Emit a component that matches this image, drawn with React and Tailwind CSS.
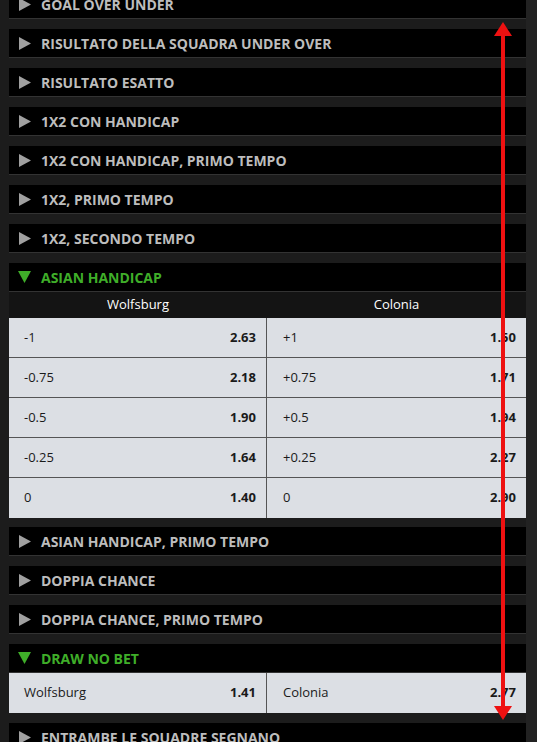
import React from 'react';

const font = { fontFamily: '"Open Sans", "Liberation Sans", sans-serif' };

function Collapsed({ title }) {
  return (
    <div className="h-[29px] mb-[10px] bg-black border-b border-[#333] flex items-center">
      <svg width="12" height="13" viewBox="0 0 12 13" className="ml-[10px] mr-[10px]">
        <polygon points="0,0 12,6.5 0,13" fill="#a0a0a0" />
      </svg>
      <span className="text-[14px] font-bold uppercase text-[#bdbdbd]">{title}</span>
    </div>
  );
}

function Open({ title }) {
  return (
    <div className="h-[29px] bg-black border-b border-[#333] flex items-center">
      <svg width="13" height="12" viewBox="0 0 13 12" className="ml-[9px] mr-[10px]">
        <polygon points="0,0 13,0 6.5,12" fill="#3fae29" />
      </svg>
      <span className="text-[14px] font-bold uppercase text-[#3fae29]">{title}</span>
    </div>
  );
}

function OddsRow({ l, lo, r, ro, last }) {
  return (
    <div className={`grid grid-cols-[258px_1fr] h-[40px] bg-[#dcdfe4] text-[13px] text-[#1a1a1a] ${last ? '' : 'border-b border-[#555]'}`}>
      <div className="flex items-center justify-between pl-[15px] pr-[10px] border-r border-[#555]">
        <span>{l}</span>
        <span className="font-bold">{lo}</span>
      </div>
      <div className="flex items-center justify-between pl-[16px] pr-[10px]">
        <span>{r}</span>
        <span className="font-bold">{ro}</span>
      </div>
    </div>
  );
}

const asian = [
  ['-1', '2.63', '+1', '1.50'],
  ['-0.75', '2.18', '+0.75', '1.71'],
  ['-0.5', '1.90', '+0.5', '1.94'],
  ['-0.25', '1.64', '+0.25', '2.27'],
  ['0', '1.40', '0', '2.90'],
];

export default function App() {
  return (
    <div className="relative h-[742px] overflow-hidden bg-[#1c1c1c] flex" style={font}>
      <div className="flex-1 pl-[9px] mt-[-10px]">
        <Collapsed title="Goal Over Under" />
        <Collapsed title="Risultato della squadra Under Over" />
        <Collapsed title="Risultato esatto" />
        <Collapsed title="1X2 con handicap" />
        <Collapsed title="1X2 con handicap, primo tempo" />
        <Collapsed title="1X2, primo tempo" />
        <Collapsed title="1X2, secondo tempo" />

        {/* Asian handicap */}
        <div className="mb-[9px]">
          <Open title="Asian Handicap" />
          <div className="grid grid-cols-[258px_1fr] h-[26px] bg-[#141414] text-[13px] text-white items-center">
            <div className="text-center">Wolfsburg</div>
            <div className="text-center">Colonia</div>
          </div>
          {asian.map((a, i) => (
            <OddsRow key={i} l={a[0]} lo={a[1]} r={a[2]} ro={a[3]} last={i === asian.length - 1} />
          ))}
        </div>

        <Collapsed title="Asian Handicap, primo tempo" />
        <Collapsed title="Doppia chance" />
        <Collapsed title="Doppia chance, primo tempo" />

        <div className="mb-[10px]">
          <Open title="Draw no bet" />
          <OddsRow l="Wolfsburg" lo="1.41" r="Colonia" ro="2.77" last />
        </div>

        <Collapsed title="Entrambe le squadre segnano" />
      </div>
      <div className="w-[11px] bg-[#222]" />

      {/* red double arrow overlay */}
      <svg className="absolute left-[493px] top-[22px]" width="20" height="698" viewBox="0 0 20 698">
        <line x1="10" y1="10" x2="10" y2="688" stroke="#ee1111" strokeWidth="4" />
        <polygon points="10,0 1,14 19,14" fill="#ee1111" />
        <polygon points="10,698 1,684 19,684" fill="#ee1111" />
      </svg>
    </div>
  );
}
